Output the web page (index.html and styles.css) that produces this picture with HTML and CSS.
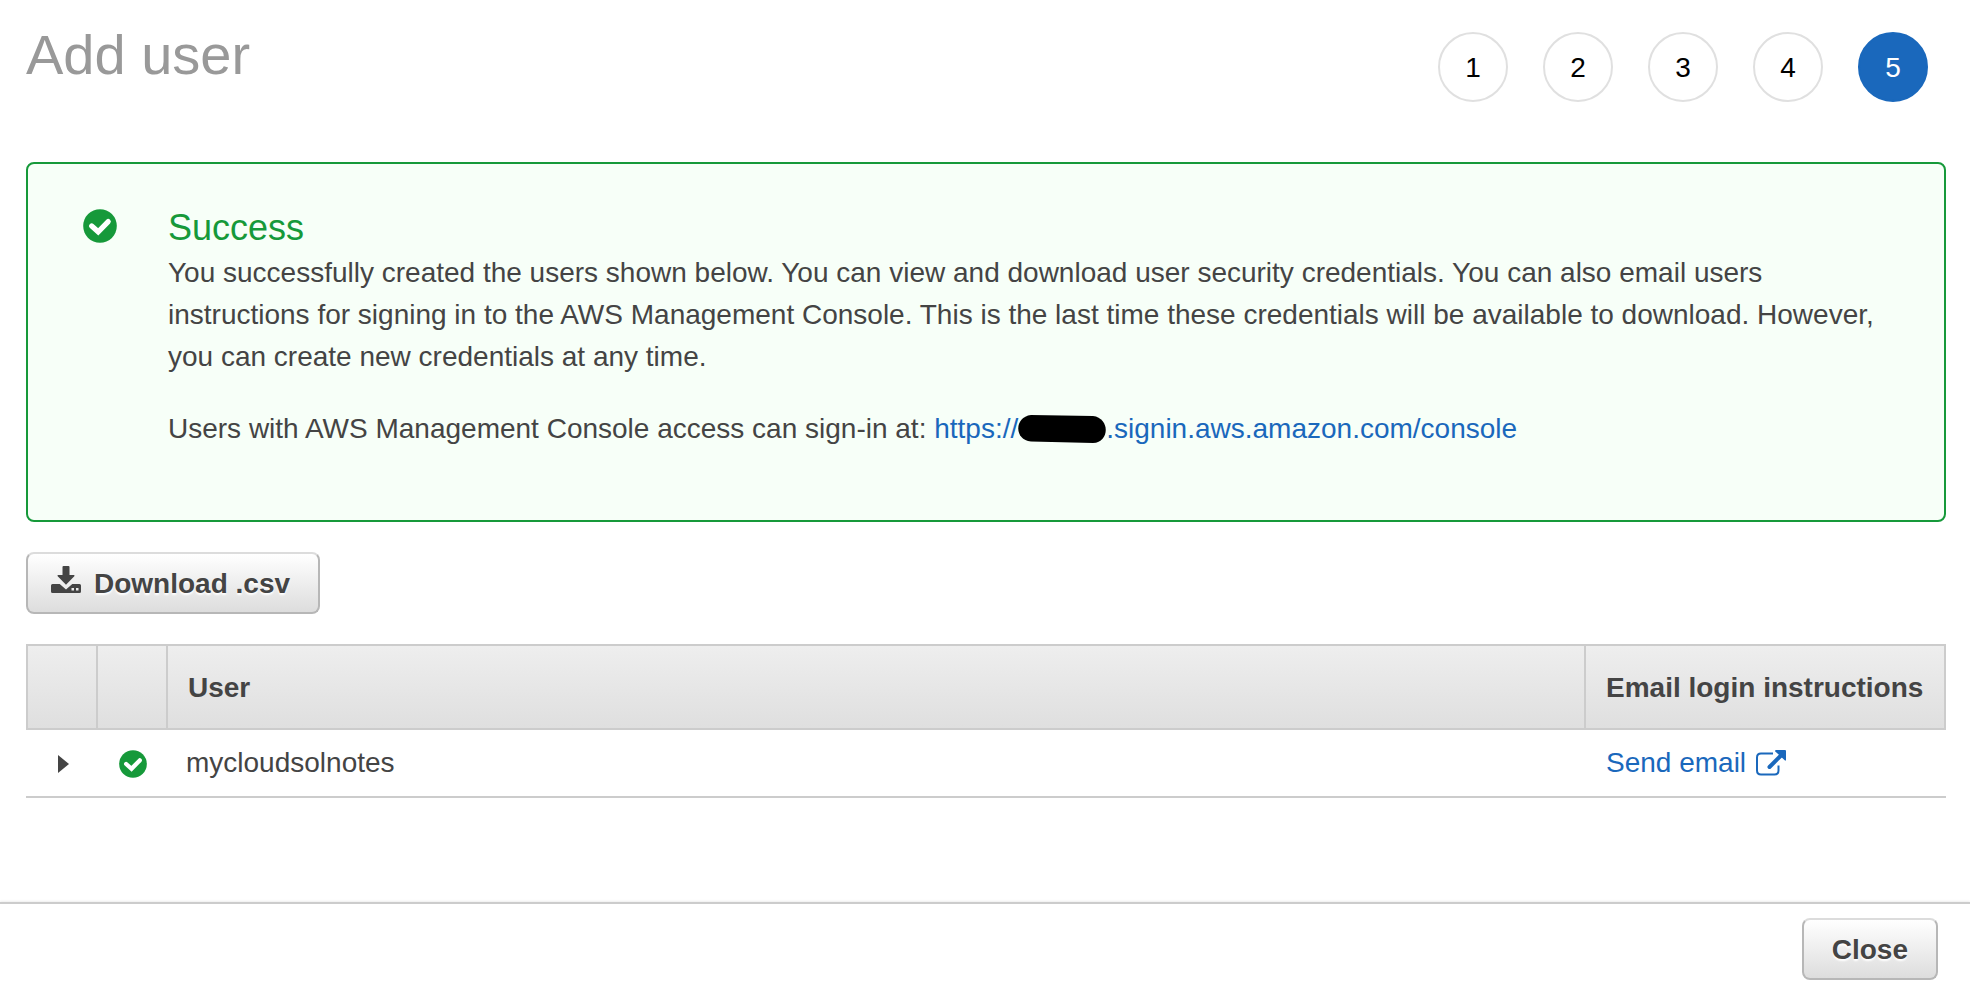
FILE: index.html
```html
<!DOCTYPE html>
<html lang="en">
<head>
<meta charset="utf-8">
<title>Add user</title>
<link rel="stylesheet" href="styles.css">
</head>
<body>
<svg class="defs" aria-hidden="true">
  <symbol id="check" viewBox="0 0 34 34">
    <circle cx="17" cy="17" r="16.800" fill="#16993a"/>
    <path d="M8.700 17L15.200 22.800L25.200 12.600" fill="none" stroke="#fff" stroke-width="5.200" stroke-linecap="round" stroke-linejoin="miter"/>
  </symbol>
</svg>
<div class="page">
  <header class="header">
    <h1 class="title">Add user</h1>
    <ol class="steps">
      <li class="step">1</li>
      <li class="step">2</li>
      <li class="step">3</li>
      <li class="step">4</li>
      <li class="step step-current" aria-current="step">5</li>
    </ol>
  </header>
  <main class="main">
    <section class="alert">
      <svg class="alert-icon" aria-hidden="true"><use href="#check"/></svg>
      <div class="alert-body">
        <h2 class="alert-title">Success</h2>
        <p class="alert-text">You successfully created the users shown below. You can view and download user security credentials. You can also email users instructions for signing in to the AWS Management Console. This is the last time these credentials will be available to download. However, you can create new credentials at any time.</p>
        <p class="alert-text">Users with AWS Management Console access can sign-in at: <a class="link" href="#">https://<svg class="redacted" viewBox="0 0 88 28" aria-hidden="true"><path d="M13 0L75 1C92 3 92 27 75 28L13 26.500C-4 25-4 2 13 0Z"/></svg>.signin.aws.amazon.com/console</a></p>
      </div>
    </section>
    <button class="button" type="button">
      <svg class="download-icon" viewBox="0 0 30 28" aria-hidden="true">
        <path fill="#444" d="M12.500 0h5q1 0 1 1v8h4.500q1 .3.300 1.200l-8.300 8.600-8.300-8.600q-.7-.9.300-1.200h4.500v-8q0-1 1-1Z"/>
        <path fill="#444" fill-rule="evenodd" d="M1.500 18h7.200l6.300 5.500 6.300-5.500h7.200q1.500 0 1.500 1.500v6q0 1.500-1.500 1.500h-27q-1.500 0-1.500-1.500v-6q0-1.500 1.500-1.500ZM20.500 22v2.500h2.500v-2.500ZM25 22v2.500h2.500v-2.500Z"/>
      </svg>
      Download .csv
    </button>
    <table class="table">
      <colgroup><col class="col-icon"><col class="col-icon"><col><col class="col-email"></colgroup>
      <thead>
        <tr><th></th><th></th><th>User</th><th>Email login instructions</th></tr>
      </thead>
      <tbody>
        <tr>
          <td class="cell-icon"><button class="expander" type="button" aria-label="Show details"><svg class="arrow" viewBox="0 0 11 18"><path d="M0 0l11 9-11 9Z" fill="#444"/></svg></button></td>
          <td class="cell-icon"><svg class="row-check" role="img" aria-label="Created"><use href="#check"/></svg></td>
          <td>mycloudsolnotes</td>
          <td class="cell-email"><a class="link send" href="#">Send email
            <svg class="external-icon" viewBox="0 0 30 26" aria-hidden="true">
              <path d="M17 3.500H5Q1 3.500 1 7.500V20.500Q1 24.500 5 24.500H18.500Q22.500 24.500 22.500 20.500V15.500" fill="none" stroke="#1a68bc" stroke-width="2"/>
              <path d="M13.500 17L25 5.500" stroke="#1a68bc" stroke-width="4" stroke-linecap="round"/>
              <path d="M19.500 0H29Q30 0 30 1V10.500H29L19 1.200Z" fill="#1a68bc"/>
            </svg></a></td>
        </tr>
      </tbody>
    </table>
  </main>
  <footer class="footer"><button class="button button-close" type="button">Close</button></footer>
</div>
</body>
</html>
```
FILE: styles.css
```css
* { box-sizing: border-box; }
body {
  margin: 0;
  background: #fff;
  color: #444;
  font: 28px/42px "Liberation Sans", Helvetica, Arial, sans-serif;
}
h1, h2, p, ol { margin: 0; padding: 0; font-weight: normal; }
svg { display: block; }
.defs { position: absolute; width: 0; height: 0; }
.page { display: flex; flex-direction: column; min-height: 100vh; }
.header {
  display: flex;
  justify-content: space-between;
  padding: 22px 42px 60px 26px;
}
.title { color: #999; font-size: 56px; line-height: 66px; }
.steps { display: flex; gap: 35px; padding-top: 10px; list-style: none; }
.step {
  display: flex;
  align-items: center;
  justify-content: center;
  width: 70px;
  height: 70px;
  padding-top: 2px;
  border: 2px solid #e0e0e0;
  border-radius: 50%;
  color: #000;
}
.step-current { border-color: #1a68bc; background: #1a68bc; color: #fff; }
.main { flex: 1; padding: 0 24px 0 26px; }
.alert {
  display: flex;
  gap: 51px;
  margin-bottom: 30px;
  padding: 40px 48px 70px 55px;
  border: 2px solid #16993a;
  border-radius: 8px;
  background: #f7fff8;
}
.alert-icon { flex: none; width: 34px; height: 34px; margin-top: 5px; }
.alert-body { flex: 1; }
.alert-title { color: #16993a; font-size: 36px; line-height: 48px; }
.alert-text + .alert-text { margin-top: 30px; }
.link { color: #1a68bc; text-decoration: none; }
.redacted { display: inline-block; width: 88px; height: 28px; vertical-align: -5px; }
.button {
  display: inline-flex;
  align-items: center;
  height: 62px;
  padding: 2px 28px 0 23px;
  border: 2px solid #b7b7b7;
  border-top-color: #dcdcdc;
  border-radius: 8px;
  background: linear-gradient(#fff, #ddd);
  color: #444;
  font: bold 28px/42px "Liberation Sans", Helvetica, Arial, sans-serif;
  text-shadow: 0 2px 2px #fff;
}
.download-icon { width: 30px; height: 28px; margin: 0 13px 8px 0; }
.table {
  width: 100%;
  margin: 30px 0;
  border-spacing: 0;
  table-layout: fixed;
}
.col-icon { width: 70px; }
.col-email { width: 362px; }
th {
  height: 86px;
  padding: 2px 0 0 20px;
  border: 2px solid #ccc;
  border-right-width: 0;
  background: linear-gradient(#eee, #dfdfdf);
  text-align: left;
  white-space: nowrap;
}
th:last-child { border-right-width: 2px; }
td { height: 68px; padding: 0 0 0 20px; border-bottom: 2px solid #ccc; }
.cell-icon { padding: 2px 0 0 4px; }
.cell-email { padding-left: 22px; }
.expander { display: block; margin: 0 auto; padding: 0; border: 0; background: none; }
.arrow { width: 11px; height: 18px; }
.row-check { width: 28px; height: 28px; margin: 0 auto; }
.send { display: flex; align-items: center; gap: 10px; }
.external-icon { width: 30px; height: 26px; }
.footer {
  display: flex;
  justify-content: flex-end;
  padding: 14px 32px 4px;
  border-top: 2px solid #ccc;
  box-shadow: 0 -1px 2px #eee;
}
.button-close { padding: 2px 28px 0; }
```
